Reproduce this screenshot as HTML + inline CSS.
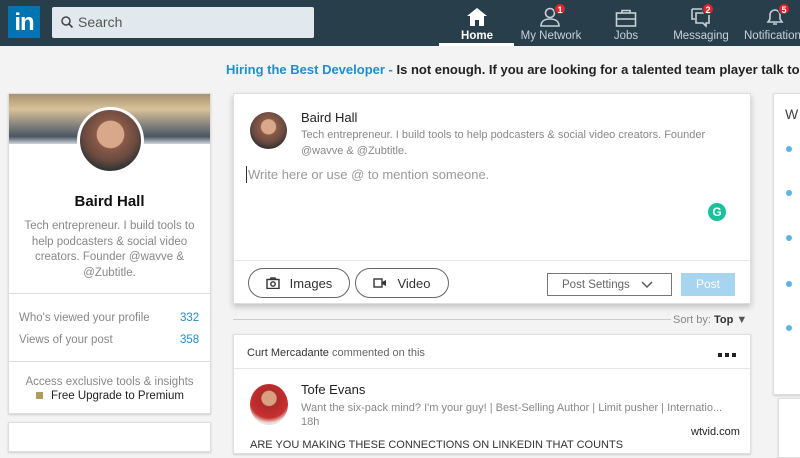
<!DOCTYPE html>
<html><head><meta charset="utf-8"><style>
*{box-sizing:border-box;margin:0;padding:0}
body{width:800px;height:442px;overflow:hidden;background:#f3f3f3;font-family:"Liberation Sans",sans-serif;position:relative;color:#333}
.a{position:absolute}
.hdr{left:0;top:0;width:800px;height:46px;background:#283e4a}
.card{background:#fff;border:1px solid #dedede;box-shadow:0 1px 2px rgba(0,0,0,.15)}
.nav{color:#c7d1d8;font-size:11.5px;text-align:center;width:80px}
.badge{background:#e0242f;color:#fff;font-size:9px;font-weight:bold;border-radius:50%;width:12px;height:12px;line-height:12px;text-align:center;border:1px solid #283e4a}
.g{color:#888}
.pill{border:1px solid #666;border-radius:16px;height:30px;font-size:13px;color:#333;display:flex;align-items:center;justify-content:center;gap:10px}
.dot{width:6px;height:6px;border-radius:50%;background:#5eb5e3;left:786px}
</style></head><body>
<div class="a hdr"></div>
<div class="a" style="left:8px;top:6px;width:32px;height:32px;background:#0073b1;color:#fff;font-weight:bold;font-size:24px;line-height:33px;text-align:center;letter-spacing:-1px">in</div>
<div class="a" style="left:52px;top:7px;width:262px;height:31px;background:#e1e9ee;border-radius:2px"></div>
<svg class="a" style="left:60px;top:15px" width="14" height="14" viewBox="0 0 14 14"><circle cx="6" cy="6" r="4" fill="none" stroke="#444" stroke-width="1.5"/><path d="M9 9l3.5 3.5" stroke="#444" stroke-width="1.6"/></svg>
<div class="a" style="left:78px;top:14px;font-size:14px;color:#555">Search</div>
<svg class="a" style="left:466px;top:7px" width="22" height="20" viewBox="0 0 22 20"><path d="M11 1L1 9h3v10h5v-6h4v6h5V9h3z" fill="#fff"/></svg>
<div class="a nav" style="left:437px;top:30px;color:#fff;font-weight:bold">Home</div>
<div class="a" style="left:439px;top:43px;width:75px;height:3px;background:#fff"></div>
<svg class="a" style="left:539px;top:7px" width="24" height="20" viewBox="0 0 24 20"><circle cx="11" cy="6" r="4.5" fill="none" stroke="#c7d1d8" stroke-width="1.6"/><path d="M2 19c0-5 4-7 9-7s9 2 9 7z" fill="none" stroke="#c7d1d8" stroke-width="1.6"/></svg>
<div class="a badge" style="left:554px;top:3px">1</div>
<div class="a nav" style="left:511px;top:30px">My Network</div>
<svg class="a" style="left:615px;top:9px" width="22" height="18" viewBox="0 0 22 18"><rect x="1.5" y="4" width="19" height="13" fill="none" stroke="#c7d1d8" stroke-width="1.6"/><path d="M7 4V1.5h8V4M1.5 10h19" fill="none" stroke="#c7d1d8" stroke-width="1.6"/></svg>
<div class="a nav" style="left:586px;top:30px">Jobs</div>
<svg class="a" style="left:691px;top:8px" width="20" height="20" viewBox="0 0 20 20"><path d="M1 1h11v3M1 1v10h3" fill="none" stroke="#c7d1d8" stroke-width="1.6"/><path d="M5 5h13v10h-3v3l-3-3H5z" fill="none" stroke="#c7d1d8" stroke-width="1.6"/></svg>
<div class="a badge" style="left:702px;top:3px">2</div>
<div class="a nav" style="left:661px;top:30px">Messaging</div>
<svg class="a" style="left:765px;top:7px" width="20" height="20" viewBox="0 0 20 20"><path d="M3 15h14l-2-3V8a5 5 0 0 0-10 0v4z M8 17h4" fill="none" stroke="#c7d1d8" stroke-width="1.6"/></svg>
<div class="a badge" style="left:778px;top:3px">5</div>
<div class="a nav" style="left:744px;top:30px;text-align:left;width:70px">Notifications</div>
<div class="a" style="left:226px;top:62px;font-size:13px;font-weight:bold;white-space:nowrap;color:#222"><span style="color:#1f8ecc">Hiring the Best Developer - </span>Is not enough. If you are looking for a talented team player talk to us</div>
<div class="a card" style="left:8px;top:93px;width:203px;height:321px"></div>
<div class="a" style="left:9px;top:94px;width:201px;height:50px;background:linear-gradient(180deg,#a89270 0%,#d8c29a 30%,#8a8680 60%,#4a5660 85%,#cfd6dc 100%)"></div>
<div class="a" style="left:77px;top:107px;width:67px;height:67px;border-radius:50%;background:radial-gradient(circle at 50% 40%,#d9a88a 0 28%,#8a5a48 30%,#6b4a40 55%,#333 75%);border:3px solid #fff"></div>
<div class="a" style="left:9px;top:193px;width:201px;text-align:center;font-weight:bold;font-size:15px;color:#111">Baird Hall</div>
<div class="a g" style="left:22px;top:219px;width:175px;text-align:center;font-size:11.5px;line-height:15.5px">Tech entrepreneur. I build tools to help podcasters &amp; social video creators. Founder @wavve &amp; @Zubtitle.</div>
<div class="a" style="left:9px;top:293px;width:201px;height:1px;background:#ddd"></div>
<div class="a g" style="left:19px;top:312px;font-size:11.5px">Who's viewed your profile</div>
<div class="a" style="left:180px;top:312px;font-size:11.5px;color:#1f8ecc">332</div>
<div class="a g" style="left:19px;top:334px;font-size:11.5px">Views of your post</div>
<div class="a" style="left:180px;top:334px;font-size:11.5px;color:#1f8ecc">358</div>
<div class="a" style="left:9px;top:361px;width:201px;height:1px;background:#ddd"></div>
<div class="a g" style="left:9px;top:376px;width:201px;text-align:center;font-size:11.5px">Access exclusive tools &amp; insights</div>
<div class="a" style="left:36px;top:392px;width:7px;height:7px;background:#b09a60"></div>
<div class="a" style="left:51px;top:390px;font-size:11.5px;color:#222">Free Upgrade to Premium</div>
<div class="a card" style="left:8px;top:422px;width:203px;height:30px"></div>
<div class="a card" style="left:233px;top:93px;width:518px;height:211px;box-shadow:0 3px 6px rgba(0,0,0,.2)"></div>
<div class="a" style="left:250px;top:112px;width:37px;height:37px;border-radius:50%;background:radial-gradient(circle at 50% 40%,#d9a88a 0 25%,#8a5a48 28%,#6b4a40 55%,#333 75%)"></div>
<div class="a" style="left:301px;top:110px;font-size:13px;color:#222">Baird Hall</div>
<div class="a g" style="left:301px;top:127px;width:440px;font-size:11px;line-height:16px">Tech entrepreneur. I build tools to help podcasters &amp; social video creators. Founder @wavve &amp; @Zubtitle.</div>
<div class="a" style="left:246px;top:166px;width:1px;height:17px;background:#333"></div>
<div class="a" style="left:248px;top:167px;font-size:13px;color:#999">Write here or use @ to mention someone.</div>
<div class="a" style="left:708px;top:203px;width:18px;height:18px;border-radius:50%;background:#15c39a;color:#fff;font-weight:bold;font-size:12px;line-height:18px;text-align:center">G</div>
<div class="a" style="left:234px;top:260px;width:516px;height:1px;background:#e6e6e6"></div>
<div class="a pill" style="left:248px;top:268px;width:102px"><svg width="14" height="12" viewBox="0 0 14 12"><rect x="1" y="2.5" width="12" height="9" fill="none" stroke="#333" stroke-width="1.4"/><path d="M4 2.5l1-1.5h4l1 1.5" fill="none" stroke="#333" stroke-width="1.4"/><circle cx="7" cy="7" r="2.2" fill="none" stroke="#333" stroke-width="1.4"/></svg>Images</div>
<div class="a pill" style="left:355px;top:268px;width:94px"><svg width="14" height="10" viewBox="0 0 14 10"><rect x="1" y="1" width="8" height="8" fill="none" stroke="#333" stroke-width="1.4"/><path d="M9 4l4-2v6l-4-2z" fill="#333"/></svg>Video</div>
<div class="a" style="left:547px;top:273px;width:125px;height:23px;border:1px solid #777;font-size:11.5px;color:#666;line-height:22px;padding-left:14px">Post Settings <svg style="margin-left:8px;vertical-align:middle" width="12" height="7" viewBox="0 0 12 7"><path d="M1 1l5 5 5-5" fill="none" stroke="#555" stroke-width="1.4"/></svg></div>
<div class="a" style="left:681px;top:273px;width:54px;height:23px;background:#a7d4ee;color:#fff;font-size:12px;text-align:center;line-height:23px">Post</div>
<div class="a" style="left:233px;top:319px;width:438px;height:1px;background:#ccc"></div>
<div class="a g" style="left:673px;top:314px;font-size:11px">Sort by: <b style="color:#333">Top</b> <span style="color:#555">&#9660;</span></div>
<div class="a card" style="left:233px;top:334px;width:518px;height:120px"></div>
<div class="a" style="left:247px;top:347px;font-size:11px;color:#666"><span style="color:#333">Curt Mercadante</span> commented on this</div>
<div class="a" style="left:718px;top:353px;width:4px;height:4px;background:#222"></div>
<div class="a" style="left:725px;top:353px;width:4px;height:4px;background:#222"></div>
<div class="a" style="left:732px;top:353px;width:4px;height:4px;background:#222"></div>
<div class="a" style="left:234px;top:368px;width:516px;height:1px;background:#e6e6e6"></div>
<div class="a" style="left:250px;top:384px;width:38px;height:41px;border-radius:50%;background:radial-gradient(circle at 50% 35%,#d8a080 0 22%,#b02a2a 25%,#c83030 60%,#e8e0d8 75%)"></div>
<div class="a" style="left:301px;top:382px;font-size:13px;color:#222">Tofe Evans</div>
<div class="a g" style="left:301px;top:402px;font-size:11px;white-space:nowrap">Want the six-pack mind? I'm your guy! | Best-Selling Author | Limit pusher | Internatio...</div>
<div class="a g" style="left:301px;top:416px;font-size:11px">18h</div>
<div class="a" style="left:250px;top:439px;font-size:11px;color:#333;white-space:nowrap">ARE YOU MAKING THESE CONNECTIONS ON LINKEDIN THAT COUNTS</div>
<div class="a card" style="left:773px;top:93px;width:40px;height:302px"></div>
<div class="a" style="left:785px;top:106px;font-size:14px;color:#444">W</div>
<div class="a dot" style="top:146px"></div>
<div class="a dot" style="top:190px"></div>
<div class="a dot" style="top:235px"></div>
<div class="a dot" style="top:281px"></div>
<div class="a dot" style="top:325px"></div>
<div class="a card" style="left:778px;top:398px;width:30px;height:60px"></div>
<div class="a" style="left:691px;top:426px;font-size:11px;color:#222">wtvid.com</div>
</body></html>
